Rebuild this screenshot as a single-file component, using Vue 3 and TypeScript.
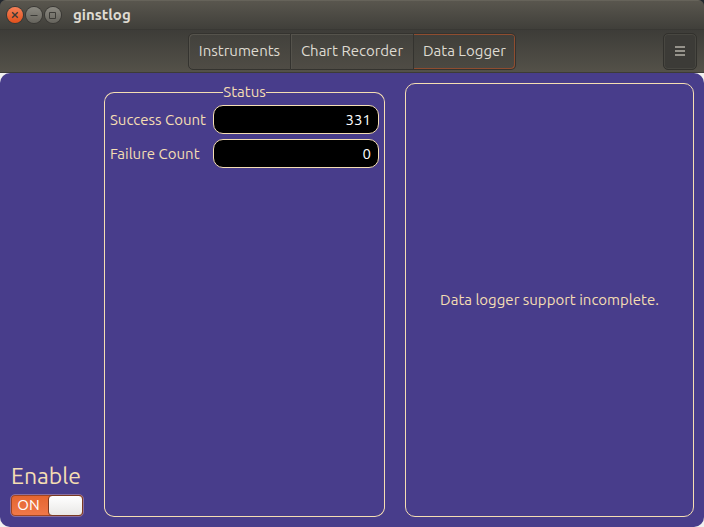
<script setup lang="ts">
import { ref } from 'vue'

interface Counter {
  id: string
  label: string
  value: number
}

const tabs: string[] = ['Instruments', 'Chart Recorder', 'Data Logger']
const activeTab = ref<string>('Data Logger')
const enabled = ref<boolean>(true)
const counters = ref<Counter[]>([
  { id: 'success', label: 'Success Count', value: 331 },
  { id: 'failure', label: 'Failure Count', value: 0 },
])
</script>

<template>
  <div class="window">
    <div class="chrome">
      <header class="titlebar">
        <button type="button" class="wm close" aria-label="Close">
          <svg viewBox="0 0 16 16"><path d="M5.2 5.2l5.6 5.6M10.8 5.2l-5.6 5.6" /></svg>
        </button>
        <button type="button" class="wm" aria-label="Minimize">
          <svg viewBox="0 0 16 16"><path d="M4.5 8.5h7" /></svg>
        </button>
        <button type="button" class="wm" aria-label="Maximize">
          <svg viewBox="0 0 16 16"><path d="M4.5 5.5h6v6h-6z" /></svg>
        </button>
        <h1>ginstlog</h1>
      </header>
      <nav class="toolbar">
        <div class="tabs">
          <button
            v-for="tab in tabs"
            :key="tab"
            type="button"
            :class="{ active: tab === activeTab }"
            @click="activeTab = tab"
          >
            {{ tab }}
          </button>
        </div>
        <button type="button" class="menu" aria-label="Menu">
          <svg viewBox="0 0 10 10"><path d="M0 1h10M0 5h10M0 9h10" /></svg>
        </button>
      </nav>
    </div>

    <div class="backdrop">
      <main class="content">
        <section class="control">
          <label for="enable">Enable</label>
          <span class="switch" :class="{ on: enabled }">
            <input id="enable" v-model="enabled" type="checkbox" role="switch" />
            <span class="state">{{ enabled ? 'ON' : 'OFF' }}</span>
            <span class="knob"></span>
          </span>
        </section>

        <section class="status" aria-labelledby="status-title">
          <h2 id="status-title">Status</h2>
          <div class="counters">
            <template v-for="c in counters" :key="c.id">
              <label :for="c.id">{{ c.label }}</label>
              <input :id="c.id" type="text" readonly :value="c.value" />
            </template>
          </div>
        </section>

        <section class="notice">
          <p>Data logger support incomplete.</p>
        </section>
      </main>
    </div>
  </div>
</template>

<style>
body {
  background: #23282f;
}
</style>

<style scoped>
.window {
  display: flex;
  flex-direction: column;
  min-height: 100vh;
  font-family: Ubuntu, 'Noto Sans', sans-serif;
  font-size: 15px;
  line-height: 20px;
}
button,
input {
  box-sizing: border-box;
  margin: 0;
  font: inherit;
}
h1,
h2,
p {
  margin: 0;
}
.chrome {
  border-radius: 6px 6px 0 0;
  background: #3c3b37;
  overflow: hidden;
}
.titlebar {
  box-sizing: border-box;
  display: flex;
  align-items: center;
  gap: 3px;
  height: 29px;
  padding: 0 7px;
  border-top: 1px solid #66635a;
  background: linear-gradient(#59564e, #403f3a);
}
.wm {
  width: 16px;
  height: 16px;
  padding: 0;
  border: 0;
  border-radius: 50%;
  background: linear-gradient(#8b8981, #66645d);
  box-shadow: 0 0 0 1px #393834;
}
.wm.close {
  background: linear-gradient(#f58058, #e2501b);
}
.wm svg {
  display: block;
  width: 16px;
  height: 16px;
  fill: none;
  stroke: #3c3b37;
  stroke-width: 1;
}
.wm.close svg {
  stroke-width: 1.4;
}
h1 {
  margin-left: 9px;
  color: #dfdbd2;
  font-size: 15px;
  font-weight: 700;
  line-height: 20px;
}
.toolbar {
  box-sizing: border-box;
  display: grid;
  grid-template-columns: 1fr auto 1fr;
  align-items: center;
  height: 44px;
  padding: 0 7px;
  border-top: 1px solid #393834;
  border-bottom: 1px solid #3d3b37;
  background: linear-gradient(#3d3c38, #545149);
}
.tabs {
  grid-column: 2;
  display: grid;
  grid-template-columns: minmax(103px, auto) minmax(123px, auto) minmax(102px, auto);
  height: 37px;
  border-radius: 5px;
}
.tabs button {
  padding: 0 7px;
  border: 1px solid #34332f;
  border-left-width: 0;
  background: linear-gradient(#42413c, #4f4c45);
  box-shadow: inset 1px 1px 0 #55534c;
  color: #dfdbd2;
  white-space: nowrap;
}
.tabs button:first-child {
  border-left-width: 1px;
  border-radius: 5px 0 0 5px;
}
.tabs button:last-child {
  border-radius: 0 5px 5px 0;
}
.tabs .active {
  border-color: #34332f;
  background: linear-gradient(#403f3a, #4b4942);
  box-shadow: inset 0 1px 0 #8f4d30, inset -1px -1px 0 #8f4d30;
}
.menu {
  justify-self: end;
  display: grid;
  place-items: center;
  width: 34px;
  height: 37px;
  padding: 0;
  border: 1px solid #32312d;
  border-radius: 5px;
  background: #3c3b37;
  box-shadow: inset 0 0 0 1px #484741;
}
.menu svg {
  width: 10px;
  height: 10px;
  fill: none;
  stroke: #96938b;
  stroke-width: 2;
}
.backdrop {
  flex: 1;
  display: flex;
  background: #f2f1f0;
}
.content {
  flex: 1;
  display: grid;
  grid-template-columns: 74px minmax(0, 281fr) minmax(0, 289fr);
  gap: 20px;
  padding: 10px;
  border-radius: 10px;
  background: #483d8b;
  color: #f5deb3;
}
.control {
  display: flex;
  flex-direction: column;
  justify-content: flex-end;
  gap: 3px;
}
.control label {
  padding-left: 1px;
  font-size: 23px;
  line-height: 30px;
}
.switch {
  position: relative;
  box-sizing: border-box;
  display: grid;
  grid-template-columns: 37px 1fr;
  height: 23px;
  border: 1px solid #8a6fa0;
  border-radius: 5px;
  background: #8d8a85;
  color: #fff;
}
.switch.on {
  background: linear-gradient(#e4652f, #f0794a);
  box-shadow: inset 0 0 0 1px #a04522;
}
.switch input {
  position: absolute;
  inset: 0;
  width: 100%;
  height: 100%;
  opacity: 0;
}
.state {
  padding-right: 2px;
  text-align: center;
  line-height: 20px;
}
.knob {
  border: 1px solid #7a3a22;
  border-radius: 4px;
  background: linear-gradient(#fff, #e9e8e6);
}
.status {
  display: flex;
  flex-direction: column;
  margin-top: -1px;
}
.status h2 {
  display: flex;
  height: 20px;
  font-size: 15px;
  font-weight: 400;
  line-height: 20px;
}
/* The rules beside the title form the top edge and corners of the frame. */
.status h2::before,
.status h2::after {
  content: '';
  flex: 1;
  height: 10px;
  margin-top: 10px;
  box-sizing: border-box;
  border-top: 1px solid #f5deb3;
}
.status h2::before {
  border-left: 1px solid #f5deb3;
  border-top-left-radius: 10px;
}
.status h2::after {
  border-right: 1px solid #f5deb3;
  border-top-right-radius: 10px;
}
.counters {
  flex: 1;
  display: grid;
  grid-template-columns: 98px minmax(0, 1fr);
  align-content: start;
  align-items: center;
  gap: 5px;
  padding: 3px 5px 5px;
  border: 1px solid #f5deb3;
  border-top: 0;
  border-radius: 0 0 10px 10px;
}
.counters label {
  white-space: nowrap;
}
.counters input {
  width: 100%;
  height: 29px;
  padding: 0 7px;
  border: 1px solid #f5deb3;
  border-radius: 10px;
  background: #000;
  color: #fff;
  text-align: right;
}
.notice {
  display: grid;
  place-items: center;
  border: 1px solid #f5deb3;
  border-radius: 10px;
}
</style>
